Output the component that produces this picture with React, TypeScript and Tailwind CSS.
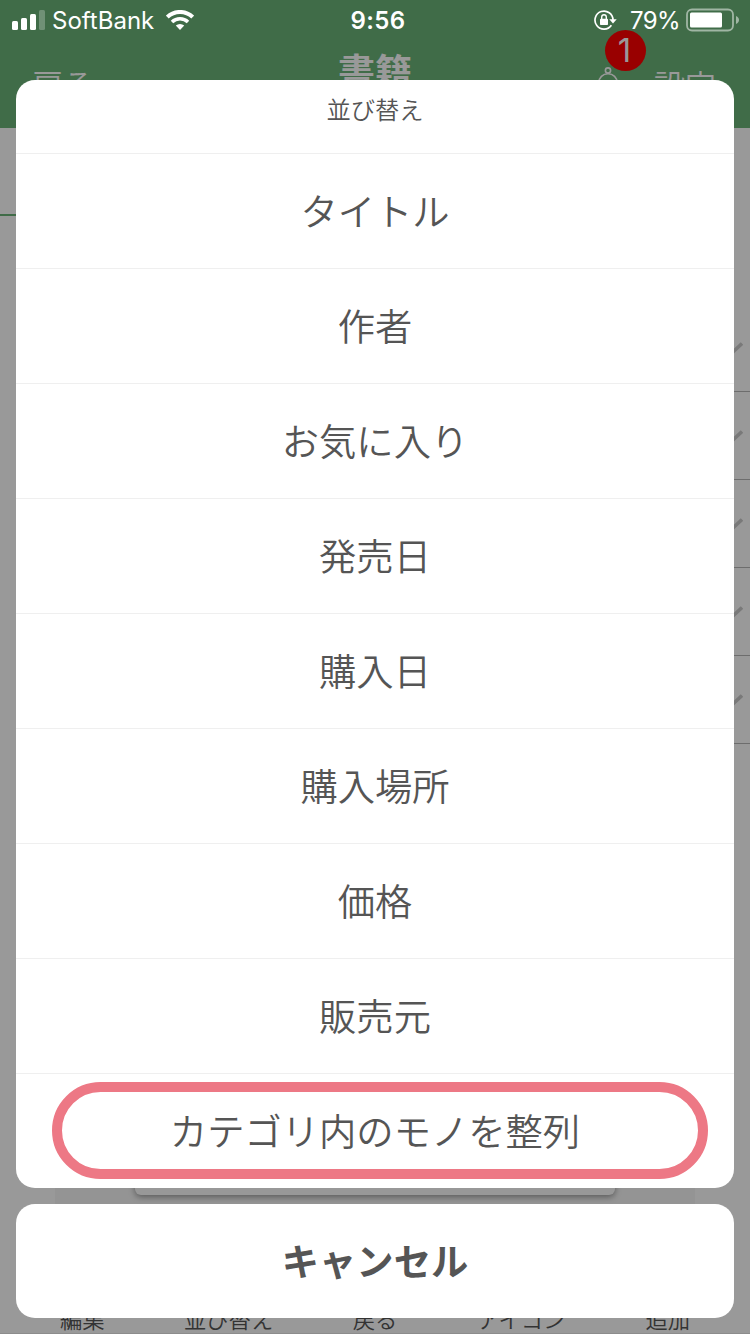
import type { ReactNode } from "react";

const sortOptions = [
  "タイトル",
  "作者",
  "お気に入り",
  "発売日",
  "購入日",
  "購入場所",
  "価格",
  "販売元",
  "カテゴリ内のモノを整列",
];

const toolbarItems = ["編集", "並び替え", "戻る", "アイコン", "追加"];

export default function App() {
  return (
    <div className="relative h-[1334px] w-[750px] overflow-hidden bg-white font-['Noto_Sans_CJK_JP',sans-serif]">
      <Page />
      <div className="absolute inset-0 bg-black/40" />
      <StatusBar />
      <ActionSheet />
    </div>
  );
}

// The book list that sits dimmed behind the sheet.
function Page() {
  return (
    <div className="flex h-full flex-col">
      <header className="grid h-32 grid-cols-3 bg-[#6bb478] text-white">
        <span className="pt-[61px] pl-[32px] text-[31px] leading-[44px] font-[350]">戻る</span>
        <span className="pt-[48px] text-center text-[37px] leading-[44px] font-bold">書籍</span>
        <div className="flex justify-end gap-[35px] pt-[66px] pr-[34px]">
          <span className="relative">
            <Bell />
            <span className="absolute -top-[36px] left-[8px] flex size-[41px] items-center justify-center rounded-full bg-[#ff0000] pr-[2px] font-['Inter',sans-serif] text-[33px] leading-none">
              1
            </span>
          </span>
          <span className="-mt-[2px] text-[31px] leading-[40px] font-[350]">設定</span>
        </div>
      </header>

      <div className="flex h-[88px]">
        <div className="w-1/2 border-b-2 border-[#6bb478]" />
      </div>

      <div className="mt-[88px] flex flex-col pl-8">
        {Array.from({ length: 5 }).map((_, i) => (
          <div key={i} className="flex h-[88px] items-center justify-end border-b border-[#b6b6b6] pr-[7px]">
            <Check />
          </div>
        ))}
      </div>

      <div className="mx-[55px] flex grow flex-col items-center bg-[#f7f7f7]">
        <div className="mt-[300px] h-[151px] w-[480px] rounded-md bg-[#fdfdfd] shadow-[0_2px_6px_rgba(0,0,0,0.4)]" />
      </div>

      <footer className="grid h-[88px] grid-cols-5 border-b border-[#e9e9e9] bg-white px-[9px] text-center">
        {toolbarItems.map((label) => (
          <span key={label} className="pt-[56px] text-[22.3px] leading-[32px] font-[350] text-[#555]">
            {label}
          </span>
        ))}
      </footer>
    </div>
  );
}

function ActionSheet() {
  return (
    <div className="absolute inset-x-4 top-20 flex flex-col gap-4 text-center text-[#555]">
      <div className="overflow-hidden rounded-[19px] bg-white">
        <div className="h-[73px] pt-[11px] text-[24.3px] leading-[36px] font-[350]">並び替え</div>
        {sortOptions.map((label, i) => (
          <SheetRow key={label} highlighted={i === sortOptions.length - 1}>
            {label}
          </SheetRow>
        ))}
      </div>
      <button type="button" className="h-[114px] rounded-[19px] bg-white text-[37.3px] leading-none font-bold">
        キャンセル
      </button>
    </div>
  );
}

function SheetRow({ highlighted, children }: { highlighted: boolean; children: ReactNode }) {
  return (
    <button
      type="button"
      className="relative flex h-[115px] w-full items-center justify-center border-t border-[#efefef] pb-[1px] text-[37.3px] leading-none font-[350]"
    >
      {children}
      {highlighted && (
        <span className="absolute top-[8px] right-[26px] left-[36px] h-[97px] rounded-[49px] border-10 border-[#ed7885]" />
      )}
    </button>
  );
}

function StatusBar() {
  return (
    <div className="absolute inset-x-0 top-0 grid h-10 grid-cols-[1fr_auto_1fr] items-center font-['Inter',sans-serif] text-[24px] leading-none text-white">
      <div className="flex items-center pl-3">
        <Signal />
        <span className="mt-[2px] ml-[7px]">SoftBank</span>
        <Wifi />
      </div>
      <span className="mt-[2px] pl-[6px] font-semibold tracking-[0.4px]">9:56</span>
      <div className="flex items-center justify-end pr-[11px]">
        <RotationLock />
        <span className="mt-[2px] mr-[6px] ml-[13px] tracking-[-0.6px]">79%</span>
        <Battery />
      </div>
    </div>
  );
}

function Signal() {
  return (
    <svg width="33" height="20" viewBox="0 0 33 20" fill="#fff">
      <rect x="0" y="11" width="6" height="9" rx="1.5" />
      <rect x="9" y="8" width="6" height="12" rx="1.5" />
      <rect x="18" y="4" width="6" height="16" rx="1.5" />
      <rect x="27" y="0" width="6" height="20" rx="1.5" opacity="0.25" />
    </svg>
  );
}

function Wifi() {
  return (
    <svg className="ml-[12px]" width="28" height="20" viewBox="0 0 28 20" fill="none" stroke="#fff">
      <path d="M1.3 7.1a18.2 18.2 0 0 1 25.4 0" strokeWidth="4" />
      <path d="M6 12a11.6 11.6 0 0 1 16 0" strokeWidth="3.6" />
      <path d="M14 20l-4.2-4.4a6.2 6.2 0 0 1 8.4 0z" fill="#fff" stroke="none" />
    </svg>
  );
}

function RotationLock() {
  return (
    <svg width="23" height="20" viewBox="0 0 23 20" fill="none" stroke="#fff" strokeWidth="1.7">
      <path d="M19 10A9 9 0 1 0 17.4 15.2" />
      <path d="M15.3 9.3h7.4L19 13.6z" fill="#fff" stroke="none" />
      <rect x="6" y="8.8" width="8" height="6.2" rx="0.8" fill="#fff" stroke="none" />
      <path d="M7.7 9V7a2.3 2.3 0 0 1 4.6 0v2" strokeWidth="1.4" />
    </svg>
  );
}

function Battery() {
  return (
    <svg width="53" height="24" viewBox="0 0 53 24" fill="none">
      <rect x="1" y="1.5" width="46" height="21" rx="5" stroke="#fff" strokeOpacity="0.5" strokeWidth="1.8" />
      <rect x="4" y="4.5" width="32" height="15" rx="1.5" fill="#fff" />
      <path d="M50 8c4 1.4 4 6.6 0 8z" fill="#fff" opacity="0.5" />
    </svg>
  );
}

function Bell() {
  return (
    <svg width="22" height="44" viewBox="0 0 22 44" fill="none" stroke="#fff" strokeWidth="1.6">
      <circle cx="11" cy="4.5" r="2.6" />
      <path d="M1.7 34V17a9.3 9.3 0 0 1 18.6 0v17z" />
    </svg>
  );
}

function Check() {
  return (
    <svg width="18" height="12" viewBox="0 0 18 12" fill="none" stroke="#cacaca" strokeWidth="3.6">
      <path d="M4 3.5l5 5.5 8-7.5" />
    </svg>
  );
}
